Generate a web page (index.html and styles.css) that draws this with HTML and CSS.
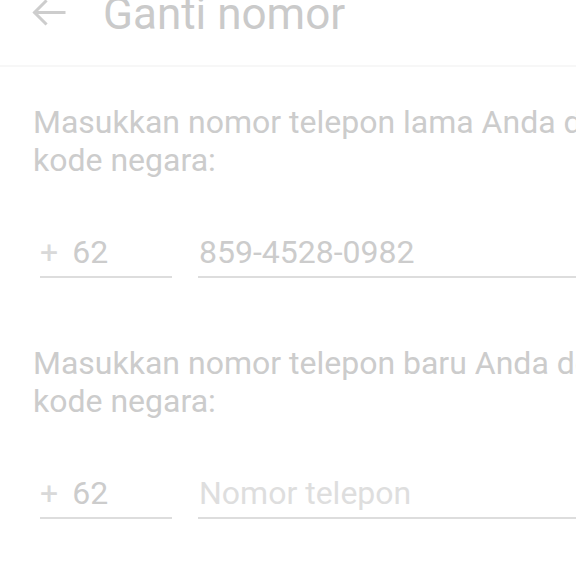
FILE: index.html
```html
<!DOCTYPE html>
<html>
<head>
<meta charset="utf-8">
<link rel="stylesheet" href="styles.css">
</head>
<body>
<div class="screen">
  <header class="appbar">
    <svg class="back" width="34" height="30" viewBox="0 0 34 30">
      <path d="M32 12.5 H3 M13.5 1.5 L2.5 12.5 L13.5 23.5" fill="none" stroke="#cdcdcd" stroke-width="3" stroke-linecap="square"/>
    </svg>
    <h1 class="title">Ganti nomor</h1>
  </header>
  <main class="content">
    <section class="block">
      <p class="label">Masukkan nomor telepon lama Anda dengan kode negara:</p>
      <div class="row">
        <div class="field code"><span class="plus">+</span><span>62</span></div>
        <div class="field phone">859-4528-0982</div>
      </div>
    </section>
    <section class="block">
      <p class="label">Masukkan nomor telepon baru Anda dengan kode negara:</p>
      <div class="row">
        <div class="field code"><span class="plus">+</span><span>62</span></div>
        <div class="field phone placeholder">Nomor telepon</div>
      </div>
    </section>
  </main>
</div>
</body>
</html>
```
FILE: styles.css
```css
html, body {
  margin: 0;
  padding: 0;
  background: #ffffff;
  overflow: hidden;
}
.screen {
  width: 576px;
  height: 576px;
  font-family: Roboto, "Noto Sans", sans-serif;
  color: #cbcbcb;
  overflow: hidden;
}
.appbar {
  height: 67px;
  display: flex;
  align-items: flex-start;
  border-bottom: 2px solid #f7f7f7;
  box-sizing: border-box;
}
.back {
  margin-left: 32px;
  margin-top: 0;
  flex: none;
}
.title {
  margin: -8px 0 0 37px;
  font-size: 44px;
  line-height: 44px;
  font-weight: 400;
  color: #cacaca;
  white-space: nowrap;
}
.content {
  padding: 36px 0 0 33px;
}
.block {
  margin-bottom: 66px;
}
.label {
  margin: 0;
  font-size: 32px;
  line-height: 38px;
  color: #cccccc;
  width: 660px;
}
.row {
  display: flex;
  gap: 26px;
  margin-top: 54px;
  padding-left: 7px;
  white-space: nowrap;
  width: 640px;
}
.field {
  font-size: 32px;
  line-height: 38px;
  padding-bottom: 5px;
  border-bottom: 2px solid #dddddd;
  color: #cccccc;
}
.code {
  width: 132px;
  flex: none;
  display: flex;
  gap: 14px;
}
.plus {
  color: #d9d9d9;
}
.phone {
  flex: 1;
  padding-left: 1px;
}
.placeholder {
  color: #dedede;
}
```
